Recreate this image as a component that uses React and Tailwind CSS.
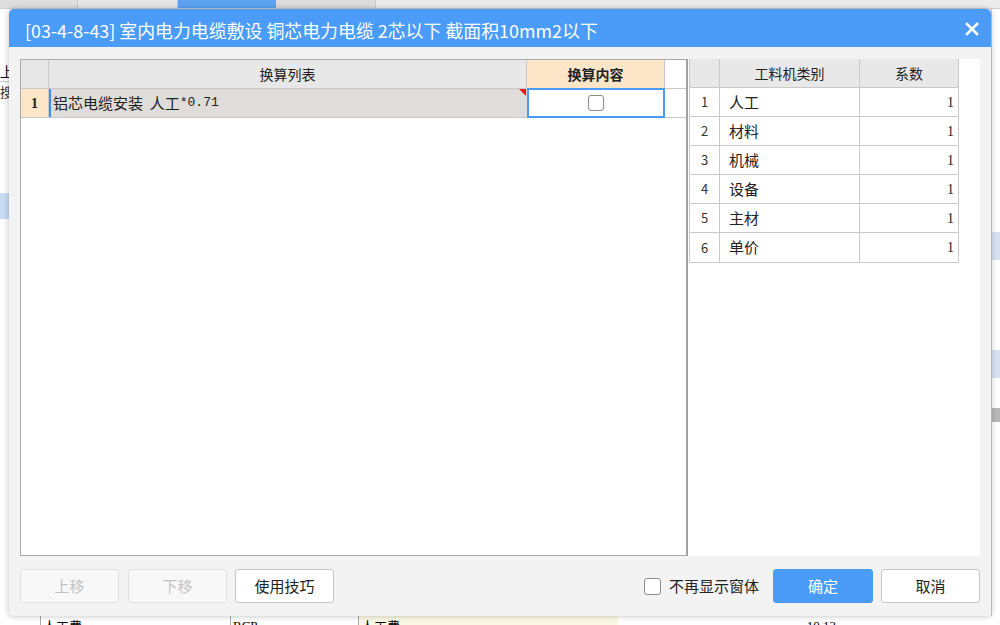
import React from "react";

const cjk = { fontFamily: '"Noto Sans CJK SC", "Noto Sans", sans-serif' };
const serif = { fontFamily: '"Liberation Serif", "Noto Sans CJK SC", serif' };

const rows = ["人工", "材料", "机械", "设备", "主材", "单价"];

function Backdrop() {
  return (
    <div className="absolute inset-0 bg-[#f0f0f0] flex flex-col" style={cjk}>
      <div className="h-[9px] flex bg-[#e4e4e4] border-b border-[#d0d0d0]">
        <div className="w-[78px] border-r border-[#c8c8c8] bg-[#dedede]" />
        <div className="w-[100px] border-r border-[#c8c8c8] bg-[#e6e6e6]" />
        <div className="w-[98px] bg-[#5ba3f2]" />
        <div className="w-[100px] border-r border-[#c8c8c8] bg-[#dcdcdc]" />
        <div className="flex-1 bg-[#ececec]" />
      </div>
      <div className="flex-1 flex">
        <div className="w-[9px] flex flex-col bg-white overflow-hidden">
          <div className="h-[52px]" />
          <div className="h-[20px] text-[14px] leading-[20px] text-black whitespace-nowrap">上</div>
          <div className="h-[20px] text-[13px] leading-[20px] text-[#333] whitespace-nowrap border-t border-[#ccc]">搜</div>
          <div className="h-[92px]" />
          <div className="h-[26px] bg-[#c7dcf3]" />
        </div>
        <div className="flex-1" />
        <div className="w-[9px] flex flex-col bg-white border-l border-[#ccc]">
          <div className="h-[223px]" />
          <div className="h-[28px] bg-[#d6e2f4]" />
          <div className="h-[90px]" />
          <div className="h-[28px] bg-[#d6e2f4]" />
          <div className="h-[30px]" />
          <div className="h-[14px] bg-[#b8b8b8]" />
        </div>
      </div>
      <div className="h-[9px] flex bg-white text-[13px] leading-[20px] overflow-hidden">
        <div className="w-[40px]" />
        <div className="w-[190px] border-l border-[#aaa] pl-[2px]">人工费</div>
        <div className="w-[128px] border-l border-[#aaa] pl-[2px]" style={serif}>RCP</div>
        <div className="w-[260px] border-l border-[#aaa] bg-[#fbf9e6] pl-[2px]">人工费</div>
        <div className="w-[220px] text-right pr-[2px]" style={serif}>10.13</div>
      </div>
    </div>
  );
}

function Button({ children, className }) {
  return (
    <div
      className={
        "h-[34px] w-[99px] rounded-[3px] border flex items-center justify-center text-[15px] " +
        className
      }
    >
      {children}
    </div>
  );
}

export default function App() {
  return (
    <div className="relative w-[1000px] h-[625px] overflow-hidden" style={cjk}>
      <Backdrop />
      <div className="absolute left-[9px] top-[9px] w-[982px] h-[607px] rounded-t-[5px] rounded-b-[3px] bg-[#f3f3f3] shadow-[0_0_6px_rgba(0,0,0,0.25)] flex flex-col overflow-hidden">
        {/* Title */}
        <div className="h-[38px] bg-[#4a9cf8] flex items-center pl-[16px] pr-[12px] text-white">
          <div className="flex-1 text-[17.9px] leading-[20px] pt-[3px] whitespace-nowrap">
            [03-4-8-43] 室内电力电缆敷设 铜芯电力电缆 2芯以下 截面积10mm2以下
          </div>
          <svg width="14" height="14" viewBox="0 0 14 14" className="mt-[2px]">
            <path d="M2 2 L12 12 M12 2 L2 12" stroke="white" strokeWidth="2.6" strokeLinecap="square" />
          </svg>
        </div>

        {/* Panels */}
        <div className="flex-1 flex flex-col px-[11px] pt-[12px] pb-[13px]">
          <div className="h-[497px] flex">
            {/* Left panel */}
            <div className="w-[668px] bg-white border border-[#a8a8a8] border-r-[2px] border-r-[#a0a0a0] flex flex-col">
              <div className="h-[29px] flex bg-[#e8e8e8] border-b border-[#c9c9c9] text-[14px] text-[#222]">
                <div className="w-[28px] border-r border-[#c9c9c9]" />
                <div className="w-[478px] border-r border-[#c9c9c9] flex items-center justify-center">换算列表</div>
                <div className="w-[138px] bg-[#fde6c8] border-r border-[#c9c9c9] flex items-center justify-center font-bold">换算内容</div>
                <div className="flex-1 bg-white" />
              </div>
              <div className="h-[29px] flex border-b border-[#c9c9c9] text-[14px] text-[#222]">
                <div className="w-[28px] bg-[#fde6c8] border-r border-[#c9c9c9] flex items-center justify-center font-bold text-[14px]" style={serif}>1</div>
                <div className="relative w-[478px] bg-[#e0dcda] border-l-[2px] border-l-[#3d8ef0] flex items-center pl-[2px] text-[15px] whitespace-pre">
                  <span>铝芯电缆安装  人工</span>
                  <span className="text-[13px]" style={{ fontFamily: '"Liberation Mono", monospace' }}>*0.71</span>
                  <svg width="7" height="7" viewBox="0 0 7 7" className="absolute right-[1px] top-[0px]">
                    <polygon points="0,0 7,0 7,7" fill="#e8151b" />
                  </svg>
                </div>
                <div className="w-[138px] bg-white border-[2px] border-[#4a9cf8] -mt-[1px] h-[30px] flex items-center justify-center">
                  <div className="w-[16px] h-[16px] border border-[#8c8c8c] rounded-[3px] bg-white" />
                </div>
                <div className="flex-1 bg-white" />
              </div>
              <div className="flex-1" />
            </div>

            {/* Right panel */}
            <div className="w-[292px] bg-white pl-[1px]">
              <div className="w-[270px] border-l border-b border-r border-[#c9c9c9] text-[14px] text-[#222]">
                <div className="h-[29px] flex bg-[#e8e8e8] border-b border-[#c9c9c9]">
                  <div className="w-[30px] border-r border-[#c9c9c9]" />
                  <div className="w-[140px] border-r border-[#c9c9c9] flex items-center justify-center">工料机类别</div>
                  <div className="flex-1 flex items-center justify-center">系数</div>
                </div>
                {rows.map((r, i) => (
                  <div key={r} className={"h-[29px] flex " + (i < rows.length - 1 ? "border-b border-[#c9c9c9]" : "")}>
                    <div className="w-[30px] border-r border-[#c9c9c9] flex items-center justify-center text-[13px] text-[#333]">{i + 1}</div>
                    <div className="w-[140px] border-r border-[#c9c9c9] flex items-center pl-[9px] text-[15px]">{r}</div>
                    <div className="flex-1 flex items-center justify-end pr-[4px] text-[14px]" style={serif}>1</div>
                  </div>
                ))}
              </div>
            </div>
          </div>

          {/* Buttons */}
          <div className="mt-[13px] flex items-center">
            <Button className="border-[#e0e0e0] bg-[#f8f8f8] text-[#c3c3c3]">上移</Button>
            <div className="w-[9px]" />
            <Button className="border-[#e0e0e0] bg-[#f8f8f8] text-[#c3c3c3]">下移</Button>
            <div className="w-[8px]" />
            <Button className="border-[#c6c6c6] bg-white text-[#222]">使用技巧</Button>
            <div className="flex-1" />
            <div className="w-[17px] h-[17px] border border-[#8c8c8c] rounded-[3px] bg-white" />
            <span className="ml-[8px] text-[15px] text-[#222]">不再显示窗体</span>
            <div className="w-[14px]" />
            <Button className="w-[100px] border-[#4a9cf8] bg-[#4a9cf8] text-white">确定</Button>
            <div className="w-[8px]" />
            <Button className="border-[#c6c6c6] bg-white text-[#222]">取消</Button>
          </div>
        </div>
      </div>
    </div>
  );
}
